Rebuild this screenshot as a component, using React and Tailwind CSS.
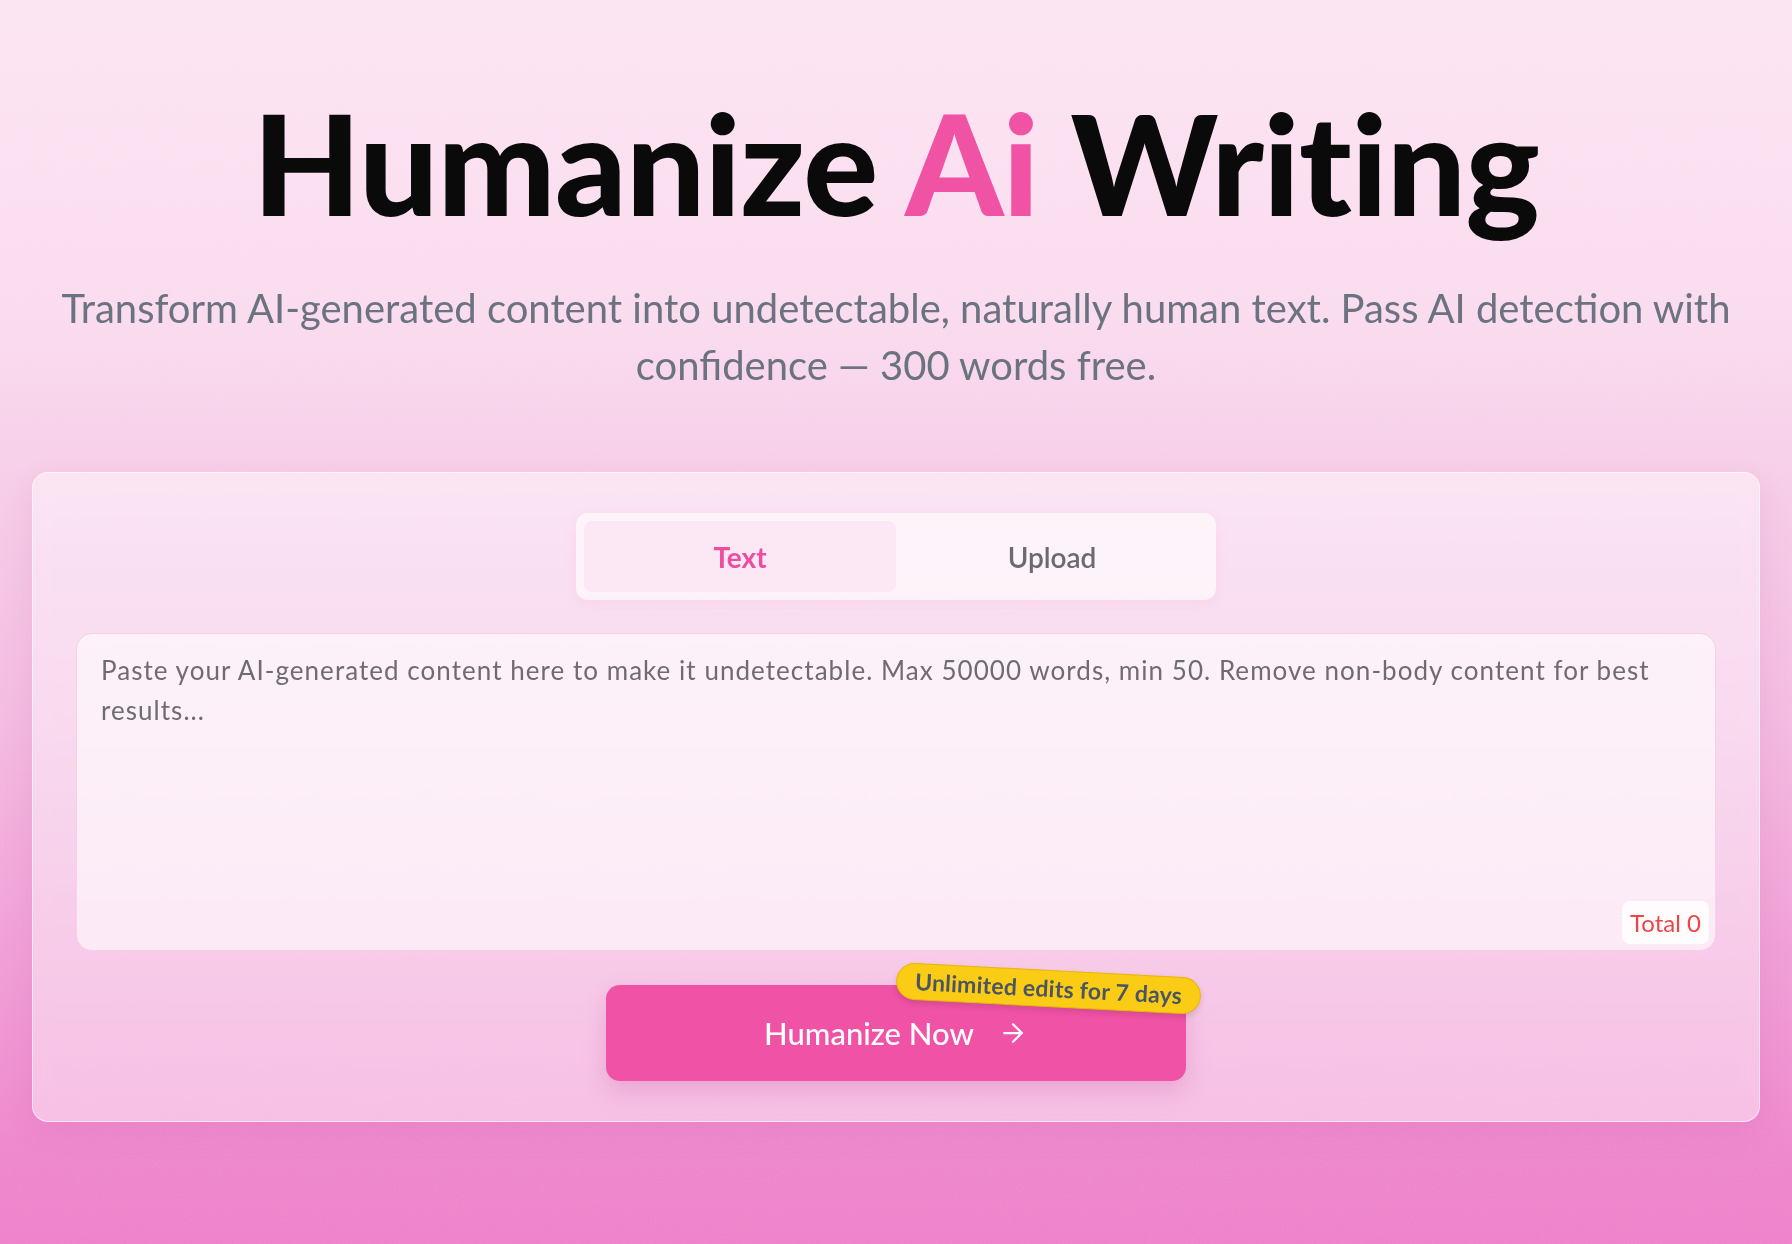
import React, { useState } from "react";
import { ArrowRight } from "lucide-react";

// fine grain laid over the pink backdrop
function Grain() {
  return (
    <svg className="pointer-events-none absolute inset-0 h-full w-full opacity-[0.35] mix-blend-soft-light" aria-hidden="true">
      <filter id="grain">
        <feTurbulence type="fractalNoise" baseFrequency="0.9" numOctaves="2" stitchTiles="stitch" />
        <feColorMatrix type="saturate" values="0" />
      </filter>
      <rect width="100%" height="100%" filter="url(#grain)" />
    </svg>
  );
}

function Tabs({ active, onChange }) {
  const tabs = ["Text", "Upload"];
  return (
    <div className="mx-auto flex w-[640px] rounded-xl bg-white/60 p-2 shadow-[0_4px_14px_rgba(236,72,153,0.08)]">
      {tabs.map((t) => (
        <button
          key={t}
          onClick={() => onChange(t)}
          className={
            active === t
              ? "h-[71px] flex-1 rounded-lg bg-[#fce7f4] text-[28px] font-bold text-[#ee4d9f]"
              : "h-[71px] flex-1 rounded-lg text-[28px] font-semibold text-[#6b6b6e]"
          }
        >
          {t}
        </button>
      ))}
    </div>
  );
}

export default function App() {
  const [tab, setTab] = useState("Text");
  const [text, setText] = useState("");
  const words = text.trim() ? text.trim().split(/\s+/).length : 0;

  return (
    <div className="relative min-h-screen overflow-hidden bg-[linear-gradient(to_bottom,#fce4f2_0%,#fadbee_25%,#f6cbe7_40%,#f3b9e0_58%,#f09fd6_75%,#ee86cc_92%,#ee7fc9_100%)] font-['Lato',sans-serif]">
      <Grain />

      <main className="relative flex flex-col items-center px-8 pt-[92px]">
        <h1 className="text-center text-[140px] font-black leading-none tracking-[-0.005em] text-[#0a0a0a]">
          Humanize <span className="text-[#f052a4]">Ai</span> Writing
        </h1>

        <p className="mt-[48px] max-w-[1720px] text-center text-[40px] leading-[57px] text-[#6b7280]">
          Transform AI-generated content into undetectable, naturally human text. Pass AI detection with confidence — 300 words free.
        </p>

        <section className="mt-[78px] w-full rounded-2xl border border-white/60 bg-white/45 px-[43px] pb-10 pt-10 shadow-[0_10px_30px_rgba(190,60,140,0.12)] backdrop-blur-sm">
          <Tabs active={tab} onChange={setTab} />

          <div className="relative mt-[33px]">
            <textarea
              value={text}
              onChange={(e) => setText(e.target.value)}
              placeholder="Paste your AI-generated content here to make it undetectable. Max 50000 words, min 50. Remove non-body content for best results..."
              className="block h-[318px] w-full resize-none rounded-2xl border border-[#f8cfe6] bg-white/60 px-6 pt-4 text-[26px] leading-[40px] tracking-[0.04em] text-[#333] outline-none placeholder:text-[#6f6b72]"
            />
            <span className="absolute bottom-[7px] right-[7px] rounded-lg bg-white/85 px-2 py-1 text-[24px] leading-[35px] text-[#ef4444]">
              Total {words}
            </span>
          </div>

          <div className="mt-[34px] flex justify-center">
            <button className="relative flex h-24 w-[580px] items-center justify-center gap-6 rounded-[14px] bg-[#f052a5] text-[31px] font-medium text-white shadow-[0_10px_24px_rgba(190,60,140,0.22)]">
              Humanize Now
              <ArrowRight size={30} strokeWidth={1.8} />
              <span className="absolute -right-[15px] -top-[15px] rotate-[3deg] rounded-full border-[1.5px] border-[#e6b800] bg-[#facc15] px-[18px] py-[4px] text-[23px] font-bold leading-[27px] tracking-[0.01em] text-[#4b5563] shadow-[0_3px_6px_rgba(0,0,0,0.12)]">
                Unlimited edits for 7 days
              </span>
            </button>
          </div>
        </section>
      </main>
    </div>
  );
}
